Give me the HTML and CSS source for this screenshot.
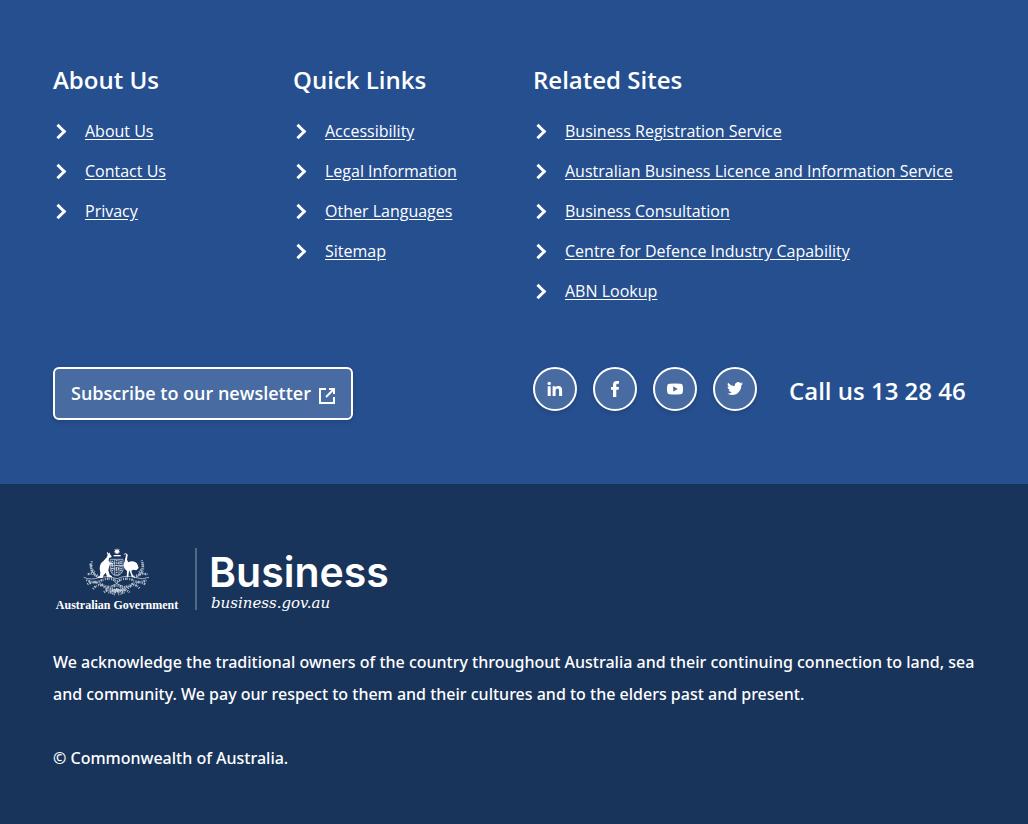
FILE: index.html
```html
<!DOCTYPE html>
<html lang="en">
<head>
<meta charset="utf-8">
<meta name="viewport" content="width=device-width, initial-scale=1">
<title>business.gov.au</title>
<link rel="stylesheet" href="styles.css">
</head>
<body>
<footer class="footer">
  <div class="footer-top">
    <nav class="columns">
      <section>
        <h2 class="title">About Us</h2>
        <ul class="links">
          <li><a href="#">About Us</a></li>
          <li><a href="#">Contact Us</a></li>
          <li><a href="#">Privacy</a></li>
        </ul>
      </section>
      <section>
        <h2 class="title">Quick Links</h2>
        <ul class="links">
          <li><a href="#">Accessibility</a></li>
          <li><a href="#">Legal Information</a></li>
          <li><a href="#">Other Languages</a></li>
          <li><a href="#">Sitemap</a></li>
        </ul>
      </section>
      <section>
        <h2 class="title">Related Sites</h2>
        <ul class="links">
          <li><a href="#">Business Registration Service</a></li>
          <li><a href="#">Australian Business Licence and Information Service</a></li>
          <li><a href="#">Business Consultation</a></li>
          <li><a href="#">Centre for Defence Industry Capability</a></li>
          <li><a href="#">ABN Lookup</a></li>
        </ul>
      </section>
    </nav>
    <div class="actions">
      <div class="subscribe-cell">
        <a class="subscribe" href="#">Subscribe to our newsletter
          <svg class="external" viewBox="0 0 16 16" aria-hidden="true"><path d="M7 1H1v14h14V9M10 1h5v5M15 1L7 9" fill="none" stroke="currentColor" stroke-width="2"/></svg>
        </a>
      </div>
      <div class="contact">
        <a class="social" href="#" aria-label="LinkedIn"><svg viewBox="0 0 16 16"><circle cx="2.2" cy="2.4" r="1.7"/><path d="M.7 5.200h3V15h-3zM5.600 5.200h2.900v1.300C9.200 5.400 10.300 5 11.500 5c2.700 0 3.600 1.700 3.600 4.300V15h-3V9.900c0-1.500-.4-2.400-1.600-2.400-1.300 0-1.900.9-1.900 2.400V15h-3z"/></svg></a>
        <a class="social" href="#" aria-label="Facebook"><svg viewBox="0 0 16 16"><path d="M6 16V8.800H4V5.900h2V4c0-2.600 1.200-4 3.700-4H12v2.800h-1.300C9.600 2.800 9.300 3.200 9.300 4v1.900H12l-.4 2.900H9.300V16z"/></svg></a>
        <a class="social" href="#" aria-label="YouTube"><svg viewBox="0 0 16 16"><path fill-rule="evenodd" d="M2.500 2.700Q8 2.200 13.500 2.700Q15.600 2.800 15.800 5Q16.200 8 15.800 11Q15.600 13.200 13.500 13.300Q8 13.800 2.500 13.300Q.4 13.200.2 11Q-.2 8 .2 5Q.4 2.800 2.500 2.700M6.200 5.300v5.200L10.800 7.900z"/></svg></a>
        <a class="social" href="#" aria-label="Twitter"><svg viewBox="0 0 16 16"><path d="M16 2.600c-.6.300-1.200.4-1.900.5.700-.4 1.200-1 1.400-1.800-.6.400-1.300.6-2.100.8A3.300 3.300 0 0 0 7.800 5.100C5.100 5 2.700 3.700 1.100 1.700c-.9 1.500-.4 3.400 1 4.400-.5 0-1-.2-1.500-.4 0 1.600 1.100 2.900 2.600 3.200-.5.100-1 .2-1.500.1.400 1.300 1.600 2.200 3.100 2.300C3.500 12.300 1.800 12.800 0 12.600 1.500 13.500 3.200 14 5 14c6.100 0 9.500-5.200 9.300-9.800.7-.4 1.200-1 1.700-1.600z"/></svg></a>
        <strong class="phone">Call us 13 28 46</strong>
      </div>
    </div>
  </div>
  <div class="footer-bottom">
    <a class="brand" href="#">
      <span class="government">
        <svg class="crest" viewBox="130 36 204 144" aria-hidden="true">
          <path d="M232 36l2 6 6-3-3 6 5 3-6 2 0 5-4-3-4 3 0-5-6-2 5-3-3-6 6 3z"/>
          <path d="M222 57h21v4h-21z"/>
          <path d="M203 48l4 5 3-4 1 6 5 6-1 3-7 2-1 8 5 6 8 3v3l-9-1-3 8-2 10 4 13 7 5v3h-14l-5-14-7 9-2 7h-16v-3l8-3 1-11-2-10c0-13 4-20 12-25l10-11 2-7-3-5z"/>
          <path d="M251 57l5-5 6 1 2 4-2 14 4 8c9-5 21-4 27 5l4 12-7 7-10-2-5 4 3 10 5 6-1 3h-5l-6-16-2-5-2 9-1 12h-5l1-19-7-7-4-10 4-12 4-19-1-3z"/>
          <g class="crest-line">
            <path d="M212 70h38v31q-3 15-19 18-16-3-19-18zM212 89h38M225 70v48M238 70v48"/>
            <path class="crest-grain" d="M218 74v36M231 72v44M244 74v36M214 81h34M214 98h34"/>
            <path d="M132 124q22 10 48 0 25-7 52 4 28-12 53-4 24 9 43 0"/>
            <path class="crest-leaf" d="M180 123q-24-5-25-23-1-15 3-27M174 119q-17-8-32-4M165 109q-14-10-12-28M283 123q26-5 27-23 1-15-4-27M290 119q17-8 34-4M298 109q14-10 10-28"/>
            <path class="crest-leaf" d="M140 132q25 12 48 0 23-9 44 4 24-13 47-4 21 12 42 0M143 145q22-12 43 0 21 14 46 2 23 12 44-2 21-12 41 0M160 159q17-21 35-5 18 15 37 7 17 8 36-7 17-16 33 5M193 169q20-16 38 0 19-15 39 0M204 155l52 16M257 155l-52 16M218 175q14-28 28 0"/>
            <path d="M222 133l9 10 10-10M213 151l18-8 19 8M224 178l7-21 7 21M216 164l15-5 16 5"/>
          </g>
        </svg>
        <span class="government-name">Australian Government</span>
      </span>
      <span class="wordmark">
        <span class="wordmark-name">Business</span>
        <span class="wordmark-url">business.gov.au</span>
      </span>
    </a>
    <p class="text">We acknowledge the traditional owners of the country throughout Australia and their continuing connection to land, sea and community. We pay our respect to them and their cultures and to the elders past and present.</p>
    <p class="text">© Commonwealth of Australia.</p>
  </div>
</footer>
</body>
</html>
```
FILE: styles.css
```css
*, *::before { box-sizing: border-box; }
body {
  margin: 0;
  background: #19345b;
  color: #fff;
  font: 16px/32px "Open Sans", "Noto Sans", sans-serif;
}
a { color: inherit; }
.footer-top {
  padding: 64px 53px;
  background: #264f90;
}
.columns, .actions {
  display: grid;
  grid-template-columns: 240px 240px minmax(0, 1fr);
}
.title {
  margin: 0 0 15px;
  font-size: 24px;
  font-weight: 600;
  line-height: 32px;
}
.links {
  margin: 0;
  padding: 0;
  list-style: none;
}
.links li {
  display: flex;
  align-items: center;
  height: 40px;
  line-height: 24px;
}
.links li::before {
  content: "";
  flex: none;
  width: 11px;
  height: 11px;
  margin-right: 21px;
  border: solid #fff;
  border-width: 3px 3px 0 0;
  transform: rotate(45deg);
}
.links a { text-underline-offset: 2px; }
.actions { padding-top: 56px; }
.subscribe-cell { grid-column: span 2; }
.subscribe {
  display: inline-flex;
  align-items: center;
  gap: 8px;
  padding: 8px 16px 9px;
  border: 2px solid #fff;
  border-radius: 6px;
  background: #486ba2;
  box-shadow: 0 2px 4px rgba(0, 0, 0, .15);
  font-size: 18px;
  font-weight: 600;
  text-decoration: none;
}
.external {
  width: 16px;
  height: 16px;
  margin-top: 5px;
}
.contact {
  display: flex;
  align-items: flex-start;
  gap: 16px;
}
.social {
  display: grid;
  place-items: center;
  width: 44px;
  height: 44px;
  border: 2px solid #fff;
  border-radius: 50%;
  background: #486ba2;
  box-shadow: 0 2px 4px rgba(0, 0, 0, .15);
}
.social svg {
  width: 16px;
  height: 16px;
  fill: #fff;
}
.phone {
  padding-left: 16px;
  font-size: 24px;
  font-weight: 600;
  line-height: 48px;
}
.footer-bottom { padding: 64px 53px 50px; }
.brand {
  display: flex;
  align-items: flex-start;
  width: fit-content;
  margin-bottom: 32px;
  text-decoration: none;
}
.government {
  display: flex;
  flex-direction: column;
  align-items: center;
  width: 142px;
  padding-right: 14px;
}
.crest {
  width: 68px;
  height: 48px;
  fill: #fff;
}
.crest-line {
  fill: none;
  stroke: #e2e8f0;
  stroke-width: 2;
}
.crest-leaf {
  stroke-width: 7;
  stroke-dasharray: 3 3 5 2 2 4;
  opacity: .75;
}
.crest-grain {
  stroke-width: 5;
  stroke-dasharray: 4 3;
  opacity: .8;
}
.government-name {
  font: bold 12px/18px "Liberation Serif", serif;
}
.wordmark {
  display: flex;
  flex-direction: column;
  padding-left: 12px;
  border-left: 2px solid #536885;
}
.wordmark-name {
  font: 600 41px/48px Inter, sans-serif;
}
.wordmark-url {
  padding-left: 2px;
  font: italic 15px/14px "DejaVu Serif", serif;
}
.text {
  margin: 0 0 32px;
  font-family: "Noto Sans", "Open Sans", sans-serif;
  font-weight: 500;
}
.text:last-child { margin: 0; }
```
